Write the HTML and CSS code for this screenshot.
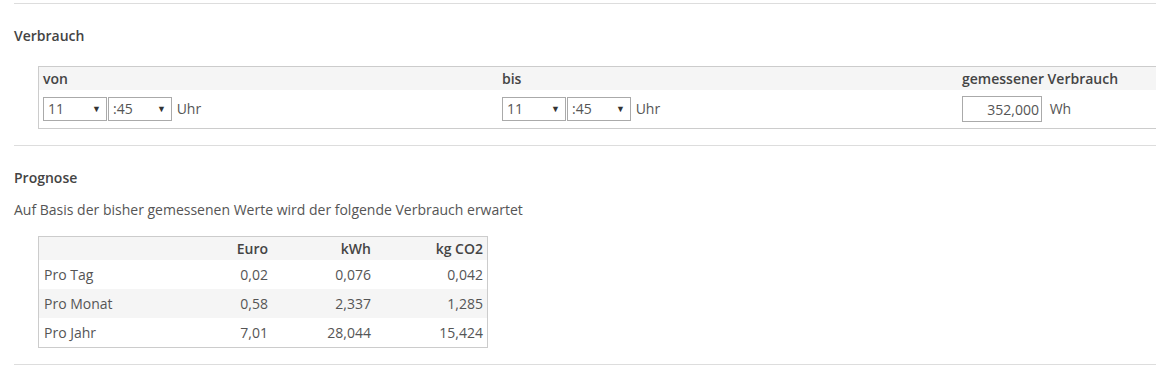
FILE: index.html
```html
<!DOCTYPE html>
<html lang="de">
<head>
    <meta charset="UTF-8">
    <meta name="viewport" content="width=device-width, initial-scale=1.0">
    <title>Verbrauch</title>
    <link rel="stylesheet" href="styles.css">
</head>
<body>
    <div class="page">
        <hr class="divider">

        <section class="block">
            <h3>Verbrauch</h3>
            <table class="reading">
                <tr class="head">
                    <th class="col-from">von</th>
                    <th class="col-to">bis</th>
                    <th class="col-value">gemessener Verbrauch</th>
                </tr>
                <tr>
                    <td>
                        <span class="pick"><select><option>11</option></select></span><span class="pick"><select><option>:45</option></select></span>
                        <span class="unit">Uhr</span>
                    </td>
                    <td>
                        <span class="pick"><select><option>11</option></select></span><span class="pick"><select><option>:45</option></select></span>
                        <span class="unit">Uhr</span>
                    </td>
                    <td>
                        <input type="text" class="amount" value="352,000">
                        <span class="unit unit-wh">Wh</span>
                    </td>
                </tr>
            </table>
        </section>

        <hr class="divider">

        <section class="block">
            <h3>Prognose</h3>
            <p>Auf Basis der bisher gemessenen Werte wird der folgende Verbrauch erwartet</p>
            <table class="forecast">
                <tr class="head">
                    <th class="label"></th>
                    <th class="num euro">Euro</th>
                    <th class="num kwh">kWh</th>
                    <th class="num co2">kg CO2</th>
                </tr>
                <tr>
                    <td class="label">Pro Tag</td>
                    <td class="num">0,02</td>
                    <td class="num">0,076</td>
                    <td class="num">0,042</td>
                </tr>
                <tr class="odd">
                    <td class="label">Pro Monat</td>
                    <td class="num">0,58</td>
                    <td class="num">2,337</td>
                    <td class="num">1,285</td>
                </tr>
                <tr>
                    <td class="label">Pro Jahr</td>
                    <td class="num">7,01</td>
                    <td class="num">28,044</td>
                    <td class="num">15,424</td>
                </tr>
            </table>
        </section>

        <hr class="divider">
    </div>
</body>
</html>
```

FILE: styles.css
```css
html, body {
    overflow: hidden;
}
body {
    margin: 0;
    font-family: "Open Sans", "Noto Sans", sans-serif;
    font-size: 14px;
    line-height: 20px;
    color: #555;
    background: #fff;
}
.page {
    padding: 3px 0 0 14px;
}
.divider {
    border: none;
    border-top: 1px solid #ddd;
    margin: 0;
}
.block {
    padding: 22px 0 16px 0;
}
h3 {
    margin: 0 0 12px 0;
    font-size: 14px;
    line-height: 20px;
    font-weight: 600;
    color: #444;
}
p {
    margin: 0 0 16px 0;
}

/* Verbrauch */
.reading {
    margin: 20px 0 0 24px;
    width: 1200px;
    border-collapse: collapse;
    border: 1px solid #ccc;
}
.reading th {
    background: #f5f5f5;
    text-align: left;
    font-weight: 600;
    color: #444;
    height: 23px;
    padding: 0 4px;
}
.reading .col-from {
    width: 451px;
}
.reading .col-to {
    width: 452px;
}
.reading td {
    height: 38px;
    padding: 0 4px;
    white-space: nowrap;
}
.pick {
    position: relative;
    display: inline-block;
    vertical-align: middle;
    margin-right: 1px;
}
.pick::after {
    content: "\25BC";
    position: absolute;
    right: 6px;
    top: 2px;
    font-size: 9px;
    color: #333;
    pointer-events: none;
}
.pick select {
    appearance: none;
    -webkit-appearance: none;
    width: 64px;
    height: 24px;
    padding: 0 4px;
    border: 1px solid #aaa;
    border-radius: 0;
    background: #fff;
    font: inherit;
    color: #555;
}
.unit {
    vertical-align: middle;
}
.amount {
    width: 80px;
    height: 26px;
    box-sizing: border-box;
    border: 1px solid #aaa;
    padding: 0 2px;
    text-align: right;
    font: inherit;
    color: #555;
    vertical-align: middle;
}
.unit-wh {
    margin-left: 4px;
}

/* Prognose */
.forecast {
    width: 450px;
    margin-left: 24px;
    border-collapse: collapse;
    border: 1px solid #ccc;
}
.forecast th {
    background: #f5f5f5;
    font-weight: 600;
    color: #444;
    height: 23px;
}
.forecast td {
    height: 29px;
}
.forecast th,
.forecast td {
    padding: 0 4px 0 5px;
}
.forecast .num {
    text-align: right;
}
.forecast .euro {
    width: 90px;
}
.forecast .kwh {
    width: 94px;
}
.forecast .co2 {
    width: 103px;
}
.forecast tr.odd td {
    background: #f5f5f5;
}
```
